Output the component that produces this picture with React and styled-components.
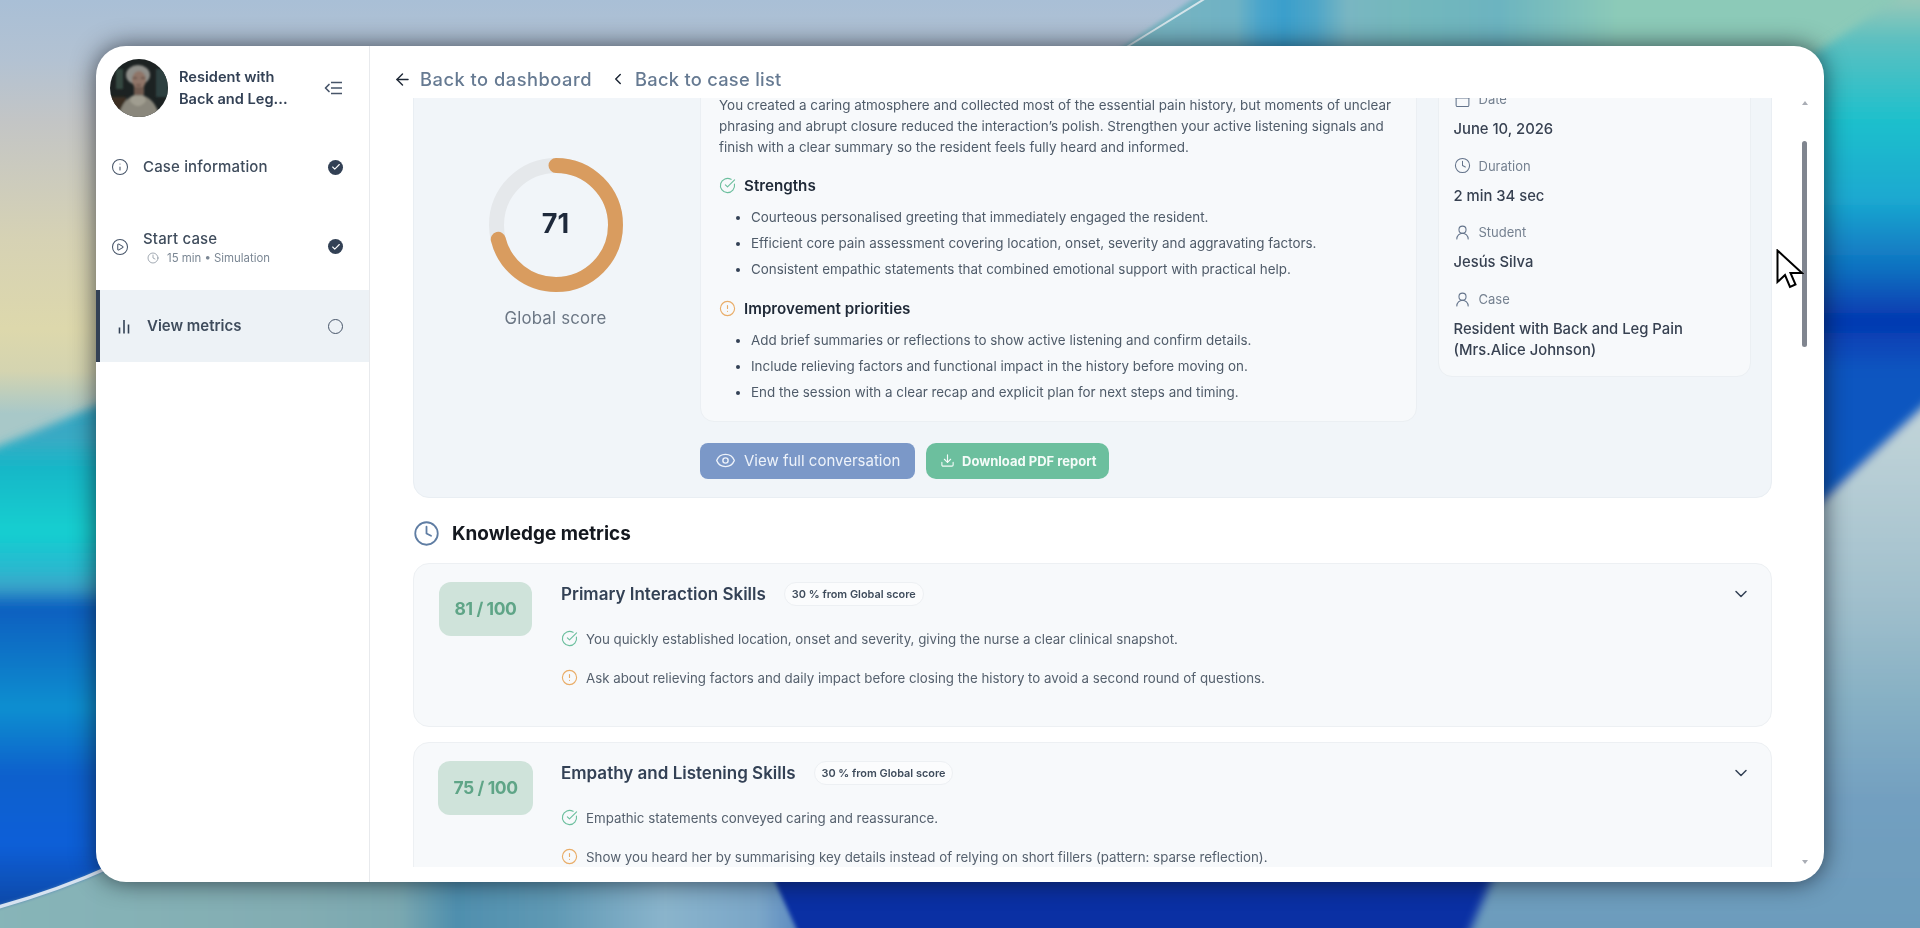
import React from "react";
import styled, { createGlobalStyle } from "styled-components";
import {
  ArrowLeft,
  Calendar,
  Check,
  ChevronDown,
  ChevronLeft,
  CircleAlert,
  CircleCheckBig,
  CirclePlay,
  Clock,
  Download,
  Eye,
  Info,
  UserRound,
} from "lucide-react";

const FONT = `"Inter", "Noto Sans", sans-serif`;

const strengths = [
  "Courteous personalised greeting that immediately engaged the resident.",
  "Efficient core pain assessment covering location, onset, severity and aggravating factors.",
  "Consistent empathic statements that combined emotional support with practical help.",
];

const priorities = [
  "Add brief summaries or reflections to show active listening and confirm details.",
  "Include relieving factors and functional impact in the history before moving on.",
  "End the session with a clear recap and explicit plan for next steps and timing.",
];

const details = [
  { icon: Calendar, label: "Date", value: "June 10, 2026" },
  { icon: Clock, label: "Duration", value: "2 min 34 sec" },
  { icon: UserRound, label: "Student", value: "Jesús Silva" },
  { icon: UserRound, label: "Case", value: "Resident with Back and Leg Pain (Mrs.Alice Johnson)" },
];

const metrics = [
  {
    score: "81 / 100",
    title: "Primary Interaction Skills",
    good: "You quickly established location, onset and severity, giving the nurse a clear clinical snapshot.",
    improve: "Ask about relieving factors and daily impact before closing the history to avoid a second round of questions.",
  },
  {
    score: "75 / 100",
    title: "Empathy and Listening Skills",
    good: "Empathic statements conveyed caring and reassurance.",
    improve: "Show you heard her by summarising key details instead of relying on short fillers (pattern: sparse reflection).",
  },
];

const GlobalStyle = createGlobalStyle`
  html, body {
    margin: 0;
    height: 100%;
    overflow: hidden;
  }
  * {
    box-sizing: border-box;
  }
`;

const ramp = (list) =>
  list.map(([at, color]) => <stop key={at} offset={at} stopColor={color} />);

const yAxis = (id, y1, y2, list) => (
  <linearGradient id={id} gradientUnits="userSpaceOnUse" x1="0" x2="0" y1={y1} y2={y2}>
    {ramp(list)}
  </linearGradient>
);

const xAxis = (id, x1, x2, list) => (
  <linearGradient id={id} gradientUnits="userSpaceOnUse" x1={x1} x2={x2} y1="0" y2="0">
    {ramp(list)}
  </linearGradient>
);

function Wallpaper() {
  return (
    <WallpaperSvg viewBox="0 0 1920 928" preserveAspectRatio="none">
      <defs>
        <filter id="soft" x="-10%" y="-10%" width="120%" height="120%">
          <feGaussianBlur stdDeviation="5" />
        </filter>
        <filter id="softer" x="-10%" y="-10%" width="120%" height="120%">
          <feGaussianBlur stdDeviation="2" />
        </filter>
        {yAxis("sky", 0, 470, [
          [0, "#a9bfd6"],
          [0.13, "#b3c2d2"],
          [0.26, "#c3c5c5"],
          [0.51, "#d6d2b4"],
          [0.7, "#ddd8ac"],
          [0.79, "#d4d4b0"],
          [0.88, "#a8c8c8"],
          [1, "#a8c8c8"],
        ])}
        {yAxis("sea", 400, 905, [
          [0, "#2aa6c4"],
          [0.07, "#3ba9c4"],
          [0.14, "#13b8c8"],
          [0.26, "#12cfd0"],
          [0.34, "#2bb7cf"],
          [0.37, "#3aa2c8"],
          [0.41, "#0b5fc0"],
          [0.52, "#0a78c8"],
          [0.61, "#0d8fd0"],
          [0.74, "#0a60cc"],
          [0.88, "#0a5fd8"],
          [1, "#0b49a8"],
        ])}
        {xAxis("sand", 0, 800, [
          [0, "#87b5b8"],
          [0.37, "#83adb3"],
          [0.5, "#7aa8b0"],
          [0.57, "#4f8fae"],
          [0.69, "#5f99b4"],
          [0.83, "#8ab4cc"],
          [0.95, "#7aa6c8"],
          [1, "#5a88c0"],
        ])}
        {xAxis("ribbon", 1125, 1920, [
          [0, "#7ab5c0"],
          [0.14, "#6fb2c4"],
          [0.17, "#4aa5cc"],
          [0.2, "#3a9fcc"],
          [0.24, "#4fa6c8"],
          [0.28, "#79b6c2"],
          [0.35, "#74b8bc"],
          [0.47, "#6cb4c0"],
          [0.62, "#8ccab8"],
          [1, "#8ccab8"],
        ])}
        {yAxis("tide", 0, 500, [
          [0, "#97c8b8"],
          [0.08, "#5cc0c0"],
          [0.24, "#1ec0cc"],
          [0.4, "#1aa8d0"],
          [0.54, "#0f6fc0"],
          [0.64, "#0538b0"],
          [0.74, "#0a55c0"],
          [1, "#0b5ac0"],
        ])}
        {yAxis("mist", 400, 928, [
          [0, "#c4d6da"],
          [0.38, "#a0bfcc"],
          [0.57, "#86b0c4"],
          [0.76, "#729fc0"],
          [1, "#6c9cbc"],
        ])}
      </defs>
      <rect x="-20" y="-20" width="1960" height="968" fill="#0a30a4" />
      <rect x="-20" y="-20" width="1300" height="500" fill="url(#sky)" />
      <polygon points="-40,462 220,355 220,912 -40,930" fill="url(#sea)" filter="url(#soft)" />
      <polygon points="1206,-10 1118,50 1118,140 1940,140 1940,-10" fill="url(#ribbon)" filter="url(#softer)" />
      <line x1="1206" y1="-2" x2="1125" y2="48" stroke="#d4e4ea" strokeWidth="2" />
      <polygon points="1790,70 1940,-30 1960,382 1780,540" fill="url(#tide)" filter="url(#soft)" />
      <polygon points="1960,372 1780,540 1500,860 1462,950 1960,950" fill="url(#mist)" filter="url(#soft)" />
      <path d="M-20,912 Q50,894 112,866 L768,866 L806,950 L-20,950 Z" fill="url(#sand)" filter="url(#softer)" />
      <path d="M-20,912 Q50,894 112,866" fill="none" stroke="#d6e2f0" strokeWidth="3.5" />
    </WallpaperSvg>
  );
}

function Portrait() {
  return (
    <svg viewBox="0 0 58 58" width="58" height="58">
      <defs>
        <filter id="photo">
          <feGaussianBlur stdDeviation="0.9" />
        </filter>
      </defs>
      <rect width="58" height="58" fill="#1c2222" />
      <g filter="url(#photo)">
        <rect x="46" y="10" width="12" height="28" fill="#2f3f40" />
        <rect x="6" y="10" width="7" height="20" fill="#34463f" />
        <rect x="0" y="38" width="16" height="20" fill="#3a2e22" />
        <path d="M8,60 Q12,38 28,35 Q46,38 50,60 Z" fill="#8a877c" />
        <path d="M20,42 Q28,52 36,42 L34,37 L22,37 Z" fill="#a09d90" />
        <ellipse cx="28" cy="16" rx="12" ry="10" fill="#8f8f8a" />
        <ellipse cx="29" cy="21" rx="7" ry="9" fill="#8f7567" />
        <rect x="24" y="28" width="10" height="8" fill="#6f5a50" />
        <path d="M23,19 h4 M31,19 h4" stroke="#4c3c38" strokeWidth="1.2" />
        <path d="M26,26 h5" stroke="#5d4038" strokeWidth="1" />
      </g>
    </svg>
  );
}

function CollapseIcon() {
  return (
    <svg width="19" height="14" viewBox="0 0 19 14" fill="none" stroke="#475569" strokeWidth="1.7">
      <path d="M5 3.5 1.5 7 5 10.5" strokeLinecap="round" strokeLinejoin="round" />
      <path d="M7 1.5h11M7 7h11M7 12.5h11" />
    </svg>
  );
}

function BarsIcon() {
  return (
    <svg width="12" height="15" viewBox="0 0 12 15" fill="none" stroke="#334155" strokeWidth="1.6">
      <path d="M1.5 8.5v6M6 1v13.5M10.5 5.5v9" />
    </svg>
  );
}

function Donut({ value }) {
  const r = 59.5;
  const length = 2 * Math.PI * r;
  return (
    <DonutBox>
      <svg width="134" height="134" viewBox="0 0 134 134" fill="none">
        <circle cx="67" cy="67" r={r} stroke="#e5e8eb" strokeWidth="15" />
        <circle
          cx="67"
          cy="67"
          r={r}
          stroke="#d99c5f"
          strokeWidth="15"
          strokeLinecap="round"
          strokeDasharray={`${(length * value) / 100} ${length}`}
          transform="rotate(-90 67 67)"
        />
      </svg>
      <DonutValue>{value}</DonutValue>
    </DonutBox>
  );
}

function FeedbackRow({ kind, children }) {
  const Icon = kind === "good" ? CircleCheckBig : CircleAlert;
  return (
    <Feedback>
      <Icon size={17} strokeWidth={1.6} color={kind === "good" ? "#6cbf9e" : "#e9ad68"} />
      <span>{children}</span>
    </Feedback>
  );
}

function MetricCard({ score, title, good, improve }) {
  return (
    <MetricBox>
      <BadgeColumn>
        <ScoreBadge>{score}</ScoreBadge>
      </BadgeColumn>
      <MetricBody>
        <MetricHead>
          <MetricTitle>{title}</MetricTitle>
          <Weight>30 % from Global score</Weight>
          <ChevronSlot>
            <ChevronDown size={20} strokeWidth={1.8} color="#334155" />
          </ChevronSlot>
        </MetricHead>
        <FeedbackList>
          <FeedbackRow kind="good">{good}</FeedbackRow>
          <FeedbackRow kind="warn">{improve}</FeedbackRow>
        </FeedbackList>
      </MetricBody>
    </MetricBox>
  );
}

export default function App() {
  return (
    <Page>
      <GlobalStyle />
      <Wallpaper />
      <Window>
        <Sidebar>
          <CaseHeader>
            <Avatar>
              <Portrait />
            </Avatar>
            <CaseName>
              Resident with
              <br />
              Back and Leg...
            </CaseName>
            <Collapse>
              <CollapseIcon />
            </Collapse>
          </CaseHeader>
          <Nav>
            <NavItem>
              <NavIcon>
                <Info size={18} strokeWidth={1.4} />
              </NavIcon>
              <NavLabel>Case information</NavLabel>
              <DoneMark>
                <Check size={10} strokeWidth={2.6} color="#fff" />
              </DoneMark>
            </NavItem>
            <NavItem>
              <NavIcon>
                <CirclePlay size={18} strokeWidth={1.4} />
              </NavIcon>
              <NavText>
                <NavLabel>Start case</NavLabel>
                <NavHint>
                  <Clock size={12} strokeWidth={1.4} />
                  15 min • Simulation
                </NavHint>
              </NavText>
              <DoneMark>
                <Check size={10} strokeWidth={2.6} color="#fff" />
              </DoneMark>
            </NavItem>
            <NavItem $active>
              <NavIcon $active>
                <BarsIcon />
              </NavIcon>
              <NavLabel $active>View metrics</NavLabel>
              <OpenMark />
            </NavItem>
          </Nav>
        </Sidebar>
        <Main>
          <TopBar>
            <TopLink $track="0.5px">
              <ArrowLeft size={19} strokeWidth={1.8} color="#1f2937" />
              Back to dashboard
            </TopLink>
            <TopLink>
              <ChevronLeft size={18} strokeWidth={2} color="#1f2937" />
              Back to case list
            </TopLink>
          </TopBar>
          <Scroller>
            <ScoreCard>
              <ScoreColumn>
                <Donut value={71} />
                <ScoreCaption>Global score</ScoreCaption>
              </ScoreColumn>
              <SummaryColumn>
                <SummaryCard>
                  <Summary>
                    You created a caring atmosphere and collected most of the essential pain history, but moments of unclear
                    <br />
                    phrasing and abrupt closure reduced the interaction’s polish. Strengthen your active listening signals and
                    <br />
                    finish with a clear summary so the resident feels fully heard and informed.
                  </Summary>
                  <SummaryHeading>
                    <CircleCheckBig size={17} strokeWidth={1.6} color="#6cbf9e" />
                    Strengths
                  </SummaryHeading>
                  <Points>
                    {strengths.map((text) => (
                      <li key={text}>{text}</li>
                    ))}
                  </Points>
                  <SummaryHeading>
                    <CircleAlert size={17} strokeWidth={1.6} color="#e9ad68" />
                    Improvement priorities
                  </SummaryHeading>
                  <Points>
                    {priorities.map((text) => (
                      <li key={text}>{text}</li>
                    ))}
                  </Points>
                </SummaryCard>
                <Actions>
                  <ConversationButton>
                    <Eye size={21} strokeWidth={1.6} />
                    View full conversation
                  </ConversationButton>
                  <ReportButton>
                    <Download size={15} strokeWidth={1.8} />
                    Download PDF report
                  </ReportButton>
                </Actions>
              </SummaryColumn>
              <DetailCard>
                {details.map(({ icon: Icon, label, value }) => (
                  <Detail key={label}>
                    <DetailLabel>
                      <Icon size={17} strokeWidth={1.5} color="#64748b" />
                      {label}
                    </DetailLabel>
                    <DetailValue>{value}</DetailValue>
                  </Detail>
                ))}
              </DetailCard>
            </ScoreCard>
            <SectionTitle>
              <Clock size={27} strokeWidth={1.6} color="#5f7da3" />
              Knowledge metrics
            </SectionTitle>
            <MetricList>
              {metrics.map((metric) => (
                <MetricCard key={metric.title} {...metric} />
              ))}
            </MetricList>
          </Scroller>
          <ScrollArrow $up />
          <ScrollThumb />
          <ScrollArrow />
          <Cursor viewBox="0 0 28 40" width="28" height="40">
            <path
              d="M1.5 1.5 L1.5 33 L9 26 L14 38 L19.5 35.5 L14.5 24 L26 24 Z"
              fill="#fff"
              stroke="#000"
              strokeWidth="2"
              strokeLinejoin="miter"
            />
          </Cursor>
        </Main>
      </Window>
    </Page>
  );
}

const Page = styled.div`
  height: 928px;
  padding: 46px 96px;
  font-family: ${FONT};
`;
const WallpaperSvg = styled.svg`
  position: fixed;
  inset: 0;
  width: 100%;
  height: 100%;
  z-index: -1;
`;
const Window = styled.div`
  display: flex;
  height: 836px;
  background: #fff;
  border-radius: 30px;
  overflow: hidden;
  box-shadow: 0 0 24px rgba(10, 15, 25, 0.68);
`;
const Sidebar = styled.aside`
  width: 274px;
  flex: none;
  border-right: 1.5px solid #e8eaed;
`;
const CaseHeader = styled.div`
  display: flex;
  align-items: flex-start;
  height: 85px;
  padding: 13px 26px 0 14px;
`;
const Avatar = styled.div`
  width: 58px;
  height: 58px;
  flex: none;
  border-radius: 50%;
  overflow: hidden;
  svg {
    display: block;
  }
`;
const CaseName = styled.div`
  margin: 7px 0 0 11px;
  font-size: 14.6px;
  line-height: 22px;
  font-weight: 600;
  color: #334155;
  white-space: nowrap;
`;
const Collapse = styled.div`
  margin: 22px 0 0 auto;
  display: flex;
`;
const Nav = styled.nav`
  display: flex;
  flex-direction: column;
  gap: 7.5px;
`;
const NavItem = styled.div`
  display: flex;
  align-items: center;
  height: 72px;
  padding: 0 26px 0 ${(p) => (p.$active ? "18px" : "15px")};
  background: ${(p) => (p.$active ? "#edf2f6" : "transparent")};
  border-left: ${(p) => (p.$active ? "4px solid #334155" : "0")};
`;
const NavIcon = styled.span`
  display: flex;
  width: ${(p) => (p.$active ? "29px" : "32px")};
  color: #475569;
`;
const NavText = styled.div`
  display: flex;
  flex-direction: column;
  gap: 1px;
  padding-top: 2px;
`;
const NavLabel = styled.span`
  font-size: 15px;
  line-height: 20px;
  font-weight: ${(p) => (p.$active ? 600 : 500)};
  letter-spacing: ${(p) => (p.$active ? "0" : "0.15px")};
  color: #3f4c5c;
`;
const NavHint = styled.span`
  display: flex;
  align-items: center;
  gap: 8px;
  padding-left: 4px;
  font-size: 11.4px;
  line-height: 16px;
  color: #7b8794;
`;
const DoneMark = styled.span`
  display: flex;
  align-items: center;
  justify-content: center;
  width: 15px;
  height: 15px;
  margin-left: auto;
  border-radius: 50%;
  background: #334155;
`;
const OpenMark = styled.span`
  width: 15px;
  height: 15px;
  margin-left: auto;
  border-radius: 50%;
  border: 1.3px solid #475569;
`;
const Main = styled.main`
  position: relative;
  flex: 1;
  min-width: 0;
`;
const TopBar = styled.header`
  display: flex;
  align-items: center;
  gap: 17px;
  height: 52px;
  padding: 14px 0 0 23px;
`;
const TopLink = styled.a`
  display: flex;
  align-items: center;
  gap: 8px;
  font-size: 18.3px;
  font-weight: 500;
  letter-spacing: ${(p) => p.$track || "0.28px"};
  color: #667a92;
`;
const Scroller = styled.div`
  height: 769px;
  overflow: hidden;
  padding: 0 52px 0 43px;
`;
const ScoreCard = styled.section`
  display: flex;
  align-items: flex-start;
  margin-top: -39.5px;
  padding: 16px 15px 18px 0;
  background: #f1f5f9;
  border: 1px solid #e9eef3;
  border-radius: 16px;
`;
const ScoreColumn = styled.div`
  display: flex;
  flex-direction: column;
  align-items: center;
  flex: none;
  width: 283px;
  margin-right: 3px;
  padding-top: 82.5px;
`;
const DonutBox = styled.div`
  position: relative;
  width: 134px;
  height: 134px;
  svg {
    display: block;
  }
`;
const DonutValue = styled.div`
  position: absolute;
  inset: 0;
  display: flex;
  align-items: center;
  justify-content: center;
  padding-bottom: 3px;
  font-size: 27px;
  font-weight: 700;
  color: #1e293b;
`;
const ScoreCaption = styled.div`
  margin-top: 14px;
  font-size: 16.8px;
  line-height: 24px;
  color: #6b7684;
  letter-spacing: 0.2px;
`;
const SummaryColumn = styled.div`
  flex: none;
  width: 717px;
  margin-right: 20.5px;
`;
const SummaryCard = styled.div`
  padding: 18px 18px 19.5px 18px;
  background: #f7f9fb;
  border: 1px solid #ebeff3;
  border-radius: 14px;
`;
const Summary = styled.p`
  margin: 0 0 16px;
  font-size: 13.45px;
  line-height: 21px;
  color: #4f5b69;
  white-space: nowrap;
`;
const SummaryHeading = styled.h3`
  display: flex;
  align-items: center;
  gap: 8px;
  margin: 0;
  font-size: 15.2px;
  line-height: 24px;
  font-weight: 600;
  color: #1f2937;
`;
const Points = styled.ul`
  margin: 9px 0 18px;
  padding-left: 32px;
  &:last-child {
    margin-bottom: 0;
  }
  li {
    font-size: 13.4px;
    line-height: 20px;
    color: #4f5b69;
    white-space: nowrap;
  }
  li + li {
    margin-top: 6px;
  }
  li::marker {
    color: #334155;
  }
`;
const Actions = styled.div`
  display: flex;
  gap: 11px;
  margin-top: 20.5px;
`;
const ConversationButton = styled.button`
  display: flex;
  align-items: center;
  gap: 8px;
  height: 36px;
  width: 215px;
  padding: 0 0 0 15px;
  border: 0;
  border-radius: 8px;
  background: #7b98c8;
  color: #eef3fa;
  font-family: ${FONT};
  font-size: 15px;
`;
const ReportButton = styled.button`
  display: flex;
  align-items: center;
  gap: 7px;
  height: 36px;
  width: 183px;
  padding: 0 0 0 14px;
  border: 0;
  border-radius: 10px;
  background: #6cbf9e;
  color: #f4fbf8;
  font-family: ${FONT};
  font-size: 13px;
  font-weight: 700;
`;
const DetailCard = styled.aside`
  display: flex;
  flex-direction: column;
  gap: 15.7px;
  flex: none;
  width: 313.5px;
  padding: 12.5px 15px 15px;
  background: #f7f9fb;
  border: 1px solid #ebeff3;
  border-radius: 14px;
`;
const Detail = styled.div``;
const DetailLabel = styled.div`
  display: flex;
  align-items: center;
  gap: 8px;
  height: 20px;
  margin-bottom: 10px;
  font-size: 13px;
  color: #758190;
`;
const DetailValue = styled.div`
  font-size: 14.8px;
  line-height: 21px;
  font-weight: 500;
  color: #374151;
`;
const SectionTitle = styled.h2`
  display: flex;
  align-items: center;
  gap: 12px;
  height: 30px;
  margin: 21px 0 14px;
  font-size: 18.9px;
  font-weight: 700;
  color: #14181f;
`;
const MetricList = styled.div`
  display: flex;
  flex-direction: column;
  gap: 15px;
`;
const MetricBox = styled.article`
  display: flex;
  flex: none;
  height: 164px;
  padding: 18px 20px 0 24px;
  background: #f7f9fb;
  border: 1px solid #edf0f3;
  border-radius: 16px;
`;
const BadgeColumn = styled.div`
  display: flex;
  justify-content: center;
  flex: none;
  width: 95px;
  margin-right: 28px;
`;
const ScoreBadge = styled.div`
  display: flex;
  align-items: center;
  height: 54px;
  padding: 0 15.5px;
  border-radius: 12px;
  background: #cfe3da;
  font-size: 17.5px;
  font-weight: 700;
  letter-spacing: -0.4px;
  color: #5fa587;
  white-space: nowrap;
`;
const MetricBody = styled.div`
  flex: 1;
  min-width: 0;
`;
const MetricHead = styled.div`
  display: flex;
  align-items: center;
  height: 24px;
`;
const MetricTitle = styled.h3`
  margin: 0 18px 0 0;
  font-size: 17px;
  font-weight: 600;
  color: #334155;
`;
const Weight = styled.span`
  display: flex;
  align-items: center;
  height: 24px;
  padding: 0 7px;
  border: 1px solid #edf0f3;
  border-radius: 12px;
  background: #fbfcfd;
  font-size: 10.9px;
  font-weight: 600;
  color: #3f4c5c;
`;
const ChevronSlot = styled.span`
  display: flex;
  margin-left: auto;
`;
const FeedbackList = styled.div`
  display: flex;
  flex-direction: column;
  gap: 19px;
  margin-top: 23px;
`;
const Feedback = styled.div`
  display: flex;
  align-items: center;
  gap: 8px;
  font-size: 13.3px;
  line-height: 20px;
  color: #56616e;
  white-space: nowrap;
`;
const ScrollThumb = styled.div`
  position: absolute;
  top: 95px;
  right: 17px;
  width: 5px;
  height: 206px;
  border-radius: 3px;
  background: #80858f;
`;
const ScrollArrow = styled.span`
  position: absolute;
  right: 16px;
  ${(p) => (p.$up ? "top: 55px;" : "bottom: 18px;")}
  border-left: 3.5px solid transparent;
  border-right: 3.5px solid transparent;
  ${(p) => (p.$up ? "border-bottom" : "border-top")}: 4px solid #a9adb5;
`;
const Cursor = styled.svg`
  position: absolute;
  left: 1406px;
  top: 203px;
`;
